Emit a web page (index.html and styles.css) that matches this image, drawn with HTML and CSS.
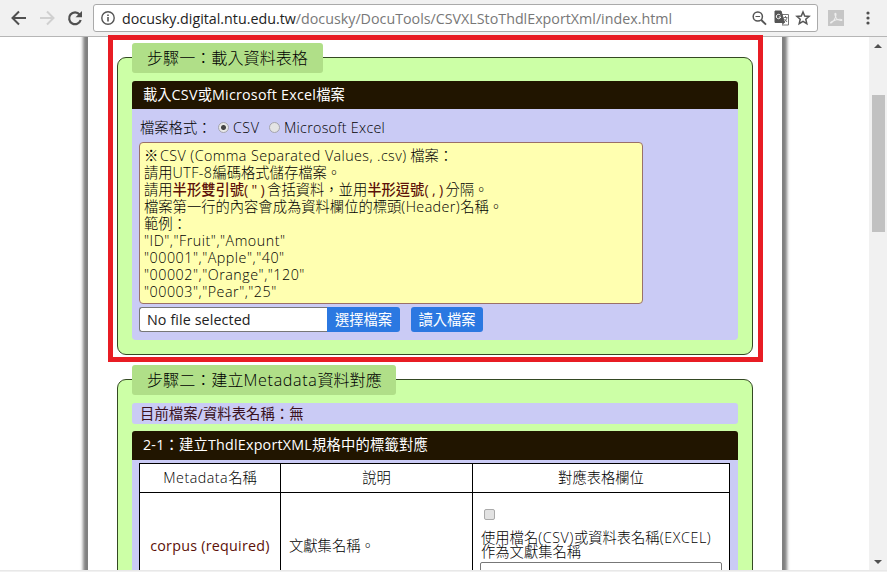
FILE: index.html
```
<!DOCTYPE html>
<html lang="zh-Hant">
<head>
<meta charset="utf-8">
<title>DocuTools</title>
<link rel="stylesheet" href="styles.css">
</head>
<body>
<div class="window">
  <header class="toolbar">
    <svg class="nav" width="90" height="36" viewBox="0 0 90 36" fill="none" stroke-width="2">
      <path d="M26 18H13M19 11.5L12.5 18L19 24.5" stroke="#505050"/>
      <path d="M40 18H53M47 11.5L53.500 18L47 24.500" stroke="#d0d0d0"/>
      <path d="M79.600 14.500A5.900 5.900 0 1 0 80.700 20" stroke="#505050" stroke-width="2.200"/>
      <path d="M82 11V17.300H75.500Z" fill="#505050"/>
    </svg>
    <div class="address">
      <svg class="info" width="14" height="14" viewBox="0 0 14 14"><circle cx="7" cy="7" r="6.200" fill="none" stroke="#555" stroke-width="1.400"/><path d="M6.200 6h1.600v4.500H6.200zM6.200 3.400h1.600V5H6.200z" fill="#555"/></svg>
      <span class="url"><span class="host">docusky.digital.ntu.edu.tw</span><span class="path">/docusky/DocuTools/CSVXLStoThdlExportXml/index.html</span></span>
      <svg class="tools" width="60" height="16" viewBox="0 0 60 16" fill="none" stroke="#555">
        <circle cx="5.800" cy="6.500" r="4.600" stroke-width="1.500"/><path d="M9.300 10L14 14.600" stroke-width="1.900"/><path d="M3.500 6.500h4.600"/>
        <path d="M30 4.500h6.500v10.500H30" stroke="#777"/><path d="M23 1h6l3.500 11.500H23z" fill="#555"/><path d="M28.300 5.200A2.200 2.200 0 1 0 28.700 7H26.800" stroke="#fff"/><path d="M31.500 7.500h4M33.500 6v1.500M35 8q-1 3-3 4M32.500 9l2.500 3" stroke="#666" stroke-width=".9"/><path d="M30 12.500l2.500 0-2 2.500z" fill="#555" stroke="none"/>
        <path d="M51 2l1.700 4 4.400.4-3.300 2.900 1 4.300L51 11.300l-3.800 2.300 1-4.300-3.300-2.900 4.400-.4z" stroke-width="1.500"/>
      </svg>
    </div>
    <svg class="pdf" width="16" height="16" viewBox="0 0 16 16"><path d="M0 0h16v16H0z" fill="#c6c6c6"/><path d="M3 13c2-1 5-5 5-8.500 0-2-1.500-1.500-1 .5.500 3 3 5.500 6 5.500 1.500 0 1-1.300-1-1.300-3 0-6 1.300-8 2.300-1.500.8-1.800 1.600-1 1.500z" fill="none" stroke="#eee" stroke-width="1.100"/></svg>
    <svg class="dots" width="4" height="14" viewBox="0 0 4 14" fill="#505050"><circle cx="2" cy="2" r="1.600"/><circle cx="2" cy="7" r="1.600"/><circle cx="2" cy="12" r="1.600"/></svg>
  </header>
  <div class="viewport">
    <main class="sheet">
      <section class="step step-one">
        <h2 class="legend">步驟一：載入資料表格</h2>
        <h3 class="bar">載入<span class="en">CSV</span>或<span class="en">Microsoft Excel</span>檔案</h3>
        <div class="panel">
          <div class="format"><span class="format-label">檔案格式：</span><i class="radio checked"></i><span class="csv">CSV</span><i class="radio"></i><span class="en">Microsoft Excel</span></div>
          <div class="hint">
            <p><span class="note">※ </span><span class="en">CSV (Comma Separated Values, .csv)</span> 檔案：</p>
            <p>請用<span class="en">UTF-8</span>編碼格式儲存檔案。</p>
            <p>請用<b>半形雙引號<span class="sign">(")</span></b>含括資料，並用<b>半形逗號<span class="sign">(,)</span></b>分隔。</p>
            <p>檔案第一行的內容會成為資料欄位的標頭<span class="en">(Header)</span>名稱。</p>
            <p>範例：</p>
            <p class="en sample">"ID","Fruit","Amount"</p>
            <p class="en sample">"00001","Apple","40"</p>
            <p class="en sample">"00002","Orange","120"</p>
            <p class="en sample">"00003","Pear","25"</p>
          </div>
          <div class="files"><span class="filename">No file selected</span><span class="button pick">選擇檔案</span><span class="button load">讀入檔案</span></div>
        </div>
      </section>
      <section class="step step-two">
        <h2 class="legend">步驟二：建立<span class="title-en">Metadata</span>資料對應</h2>
        <p class="current">目前檔案/資料表名稱：無</p>
        <h3 class="bar mapping">2-1：建立<span class="en">ThdlExportXML</span>規格中的標籤對應</h3>
        <div class="panel table-panel">
          <div class="grid">
            <div class="cell head"><span class="en">Metadata</span>名稱</div><div class="cell head">說明</div><div class="cell head">對應表格欄位</div>
            <div class="cell name">corpus (required)</div><div class="cell desc">文獻集名稱。</div>
            <div class="cell map"><i class="check"></i><p>使用檔名<span class="en">(CSV)</span>或資料表名稱<span class="en">(EXCEL)</span><br>作為文獻集名稱</p><div class="field"></div></div>
          </div>
        </div>
      </section>
    </main>
    <div class="scroll"><i class="up"></i><i class="thumb"></i><i class="down"></i></div>
  </div>
  <div class="marker"></div>
</div>
</body>
</html>
```
FILE: styles.css
```
* { box-sizing: border-box; }
body, h2, h3, p { margin: 0; }
h2, h3 { font-weight: 400; }
body { width: 887px; height: 572px; overflow: hidden; font: 14.3px/17px "Open Sans", "Noto Sans CJK TC", sans-serif; color: #000; background: #f1f1f1; }
i { display: block; flex: none; }
.en { letter-spacing: .2px; }
.window { position: relative; height: 572px; display: flex; flex-direction: column; }
.toolbar { height: 37px; flex: none; display: flex; align-items: flex-start; background: #f1f1f1; border-bottom: 1px solid #b6b6b6; }
.nav { flex: none; }
.address { margin: 4px 0 0 3px; width: 725px; height: 28px; border: 1px solid #aaa; border-radius: 3px; background: #fff; display: flex; align-items: center; padding-left: 7px; }
.url { margin-left: 7px; width: 630px; font-size: 14.28px; white-space: nowrap; color: #777; }
.host { color: #222; }
.info, .tools { flex: none; }
.pdf { margin: 10px 0 0 10px; }
.dots { margin: 11px 0 0 22px; }
.viewport { height: 534px; flex: none; background: #fff; overflow: hidden; display: flex; justify-content: space-between; border-bottom: 1px solid #e8e8e8; }
.sheet { width: 694px; margin-left: 88px; padding: 20px 29px 0; box-shadow: 0 0 3px 5px #808080; height: 640px; flex: none; }
.step { border: 1px solid #344923; border-radius: 9px; background: #ccffa6; padding: 0 14px; width: 636px; }
.step-one { height: 298px; }
.step-two { height: 300px; margin-top: 24px; }
.legend { width: 191px; height: 30px; margin: -15px 0 8px; border-radius: 3px; background: #b0df88; font-size: 16.1px; line-height: 30px; padding-left: 15px; white-space: nowrap; font-weight: 300; }
.step-two .legend { width: 264px; }
.title-en { letter-spacing: .65px; }
.bar { height: 28px; border-radius: 3px 3px 0 0; background: #211500; color: #fff; font-size: 14.3px; line-height: 28px; padding-left: 11px; }
.bar .en { letter-spacing: .23px; }
.panel { background: #cacbf5; border-radius: 0 0 4px 4px; height: 231px; padding: 10px 7px 0; }
.format { display: flex; align-items: center; height: 17px; margin-bottom: 6px; font-weight: 300; }
.format-label { width: 79px; padding-left: 1px; }
.format .en { letter-spacing: .27px; }
.radio { width: 11px; height: 11px; border-radius: 50%; border: 1px solid #a5a5ad; background: #e4e4e4; margin-right: 4px; }
.checked { background: radial-gradient(circle, #444 0 2px, #e8e8e8 3px); }
.csv { width: 36px; letter-spacing: .5px; }
.hint { width: 504px; height: 162px; border: 1px solid #9a7068; border-radius: 4px; background: #ffffb0; padding: 4px; white-space: nowrap; font-weight: 300; }
.hint .en { letter-spacing: .42px; }
.hint .sample { letter-spacing: .52px; }
.note { letter-spacing: -1px; }
b { color: #5c1008; font-weight: 500; }
.sign { letter-spacing: 3.3px; margin-right: -1px; }
.files { display: flex; height: 25px; margin-top: 3px; line-height: 25px; }
.filename { width: 188px; border: 1px solid #777; border-right: 0; border-radius: 3px 0 0 3px; background: #fff; padding-left: 7px; line-height: 24px; color: #222; letter-spacing: .1px; }
.button { background: #2b78e1; color: #fff; text-align: center; }
.pick { width: 73px; border-radius: 0 3px 3px 0; }
.load { width: 72px; margin-left: 11px; border-radius: 3px; }
.current { height: 21px; margin-bottom: 7px; border-radius: 3px; background: #cacbf5; padding-left: 8px; line-height: 21px; color: #391020; letter-spacing: .1px; }
.step-two .bar { height: 29px; }
.mapping, .mapping .en { letter-spacing: .2px; }
.table-panel { padding-top: 3px; }
.grid { display: grid; grid-template: 29px 130px / 141px 192px 257px; width: 591px; border-left: 1px solid #000; border-top: 1px solid #000; background: #fff; }
.cell { border-right: 1px solid #000; border-bottom: 1px solid #000; display: flex; align-items: center; font-weight: 300; }
.head { justify-content: center; padding-bottom: 1px; }
.head .en { letter-spacing: .5px; }
.name { color: #5c1008; justify-content: center; height: 105px; border-bottom: 0; font-weight: 400; letter-spacing: .25px; }
.desc { padding-left: 8px; height: 105px; border-bottom: 0; }
.map { display: block; padding: 16px 7px 0 8px; line-height: 14px; white-space: nowrap; }
.map .en { letter-spacing: .6px; }
.check { width: 11px; height: 11px; margin: 0 0 11px 3px; border: 1px solid #aaa; border-radius: 2px; background: #e2e2e2; }
.field { height: 28px; margin: 3px 0 0 -1px; border: 1px solid #777; border-radius: 2px; width: 242px; }
.scroll { width: 18px; flex: none; background: #f1f1f1; display: flex; flex-direction: column; align-items: center; }
.up { border: 4px solid transparent; border-top: 0; border-bottom-color: #505050; margin-top: 7px; }
.thumb { width: 13px; height: 137px; background: #c1c1c1; margin-top: 47px; }
.down { border: 4px solid transparent; border-bottom: 0; border-top-color: #505050; margin-top: 328px; }
.marker { position: absolute; left: 108px; top: 35px; width: 655px; height: 327px; border: 5px solid #e81c24; }
```
